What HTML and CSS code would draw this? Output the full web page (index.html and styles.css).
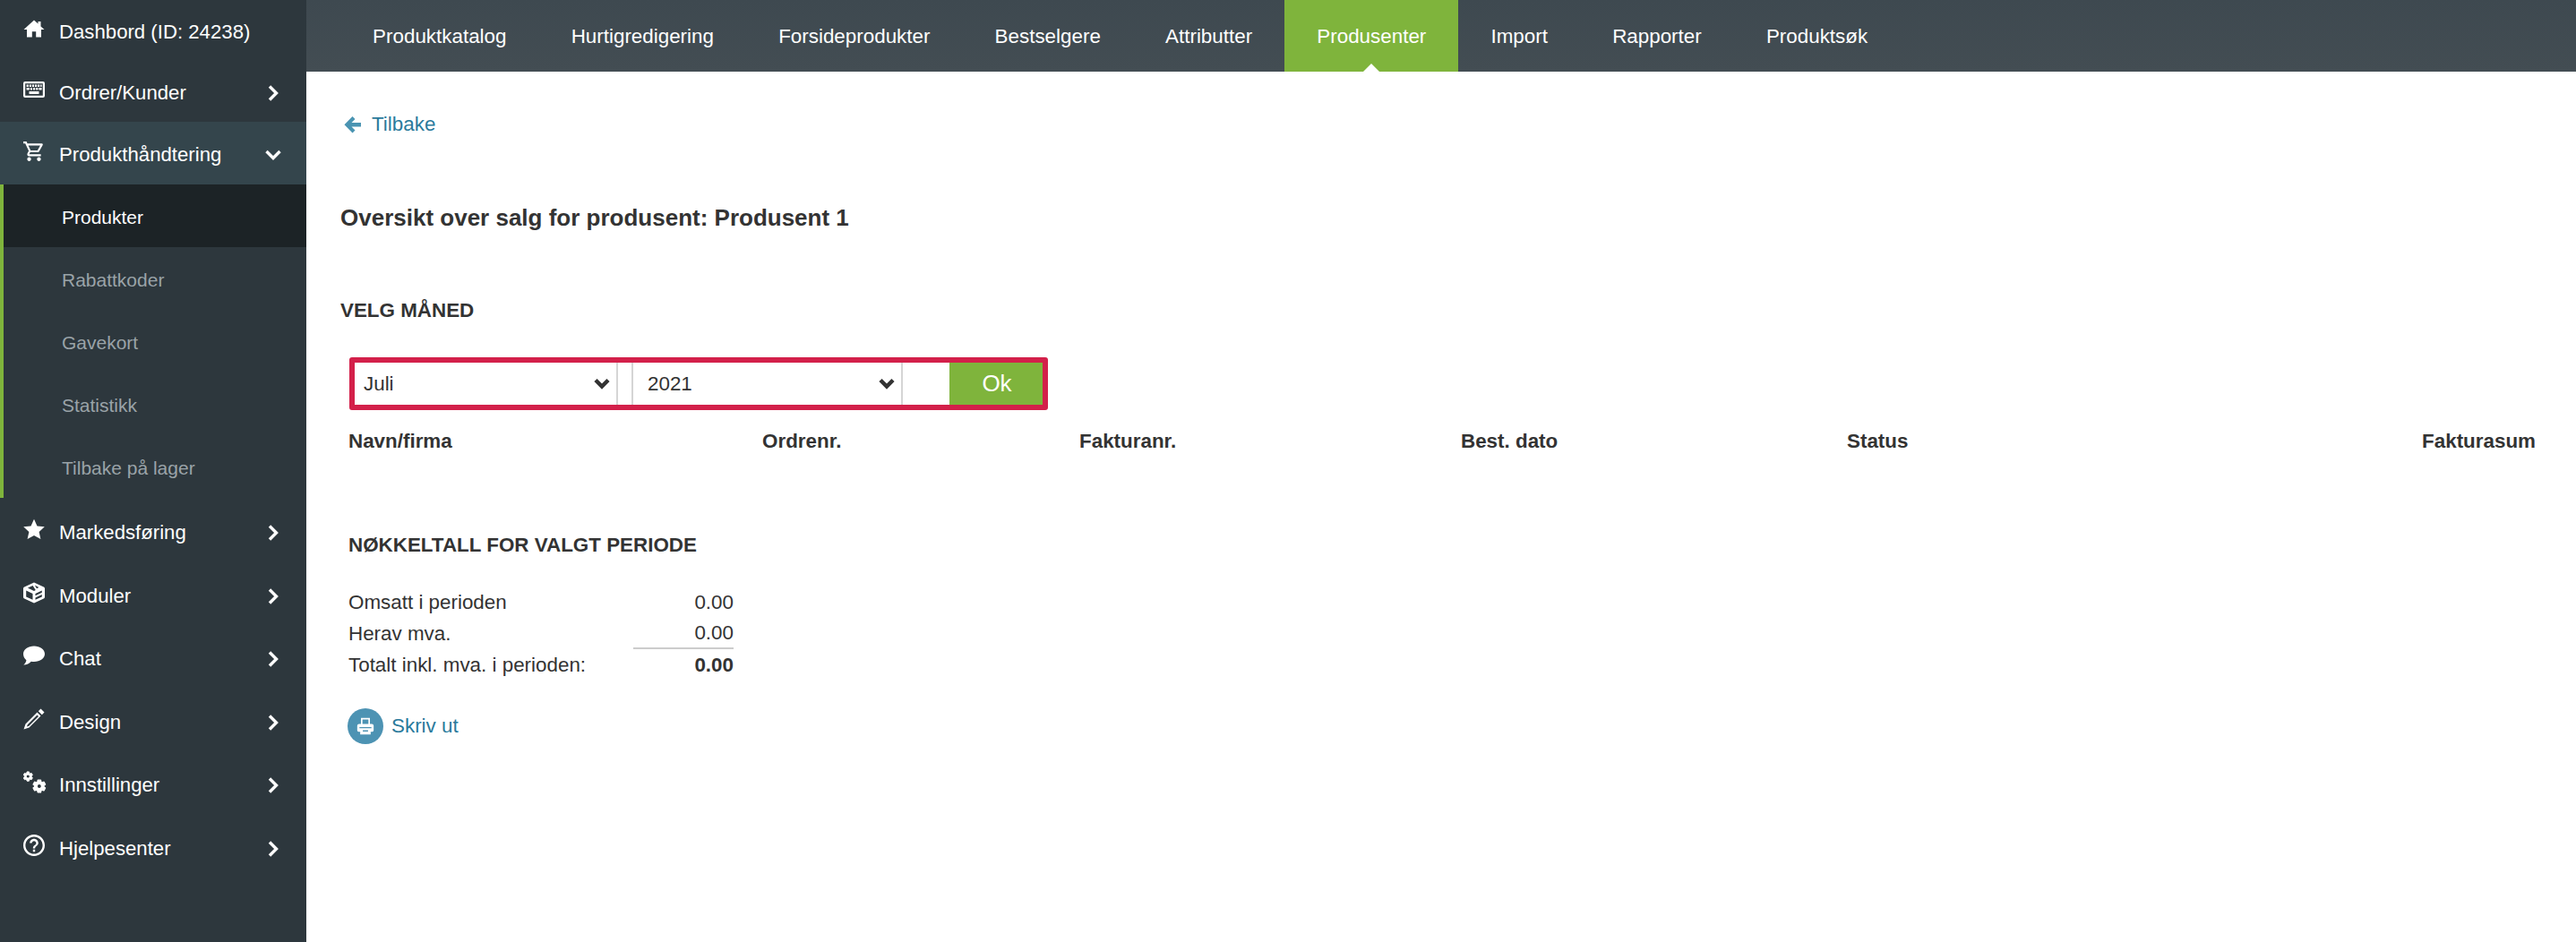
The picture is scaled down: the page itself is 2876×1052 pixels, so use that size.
FILE: index.html
```html
<!DOCTYPE html>
<html lang="no">
<head>
<meta charset="utf-8">
<title>Oversikt over salg</title>
<link rel="stylesheet" href="styles.css">
</head>
<body>
<div class="app">
  <aside class="sidebar">
    <a class="nav-item nav-short"><svg class="nav-icon" viewBox="0 0 24 24"><path d="M12 2.500 0.500 13H4v8.500h5.800v-6.300h4.400v6.300H20V13h3.500L19.500 9.400V4h-3v2.600z"/></svg><span class="nav-label">Dashbord (ID: 24238)</span></a>
    <a class="nav-item nav-short"><svg class="nav-icon" viewBox="0 0 24 24"><path fill-rule="evenodd" d="M2 3h20a2 2 0 0 1 2 2v14a2 2 0 0 1-2 2H2a2 2 0 0 1-2-2V5a2 2 0 0 1 2-2zM2.200 5.200v13.600h19.600V5.200zM3.600 6.500h2.200v2.400H3.600zM6.800 6.500H9v2.400H6.800zM9.900 6.500h2.200v2.400H9.900zM13 6.500h2.200v2.400H13zM16.100 6.500h2.200v2.400h-2.200zM19.200 6.500h1.400v2.400h-1.400zM3.600 10h3.200v2.400H3.600zM7.800 10H10v2.400H7.800zM11 10h2.200v2.400H11zM14.200 10h2.200v2.400h-2.200zM17.400 10h3.200v2.400h-3.200zM6.500 14h11v3h-11z"/></svg><span class="nav-label">Ordrer/Kunder</span><svg class="nav-chev" viewBox="0 0 14 20"><path d="M3 2.500 10.500 10 3 17.500"/></svg></a>
    <a class="nav-item nav-open"><svg class="nav-icon" viewBox="1 1 22 22"><path d="M15.550 13c.75 0 1.410-.41 1.750-1.030l3.580-6.490A.996.996 0 0 0 20.010 4H5.210l-.94-2H1v2h2l3.600 7.590-1.350 2.440C4.520 15.370 5.480 17 7 17h12v-2H7l1.100-2h7.450zM6.160 6h12.150l-2.760 5H8.530L6.160 6zM7 18c-1.100 0-1.990.9-1.990 2S5.900 22 7 22s2-.9 2-2-.9-2-2-2zm10 0c-1.100 0-1.990.9-1.990 2s.89 2 1.990 2 2-.9 2-2-.9-2-2-2z"/></svg><span class="nav-label">Produkthåndtering</span><svg class="nav-chev nav-chev-down" viewBox="0 0 20 14"><path d="M2.500 3 10 10.500 17.500 3"/></svg></a>
    <div class="subnav">
      <a class="sub-item sub-active">Produkter</a>
      <a class="sub-item">Rabattkoder</a>
      <a class="sub-item">Gavekort</a>
      <a class="sub-item">Statistikk</a>
      <a class="sub-item">Tilbake på lager</a>
    </div>
    <a class="nav-item"><svg class="nav-icon" viewBox="0 0 24 24"><path d="M12 .8l3.500 7.600 8.300.9-6.200 5.600 1.800 8.200L12 18.900l-7.400 4.200 1.800-8.200L.2 9.300l8.300-.9z"/></svg><span class="nav-label">Markedsføring</span><svg class="nav-chev" viewBox="0 0 14 20"><path d="M3 2.500 10.500 10 3 17.500"/></svg></a>
    <a class="nav-item"><svg class="nav-icon" viewBox="0 0 24 24"><path fill-rule="evenodd" d="M12 .5 22.800 5.500c.7.300 1.200 1 1.200 1.800v9.400c0 .8-.5 1.500-1.200 1.800L12 23.500 1.200 18.500C.5 18.200 0 17.500 0 16.700V7.300C0 6.500.5 5.800 1.200 5.500zM3.200 9.500v6.900l7.300 3.400v-6.900zM13.500 12.900v2.300l7.300-3.400V9.500zM13.500 17.400v2.400l7.300-3.400V14zM10.600 4 5 6.600l7 3.300 1.800-.9zM12.800 3.600 15 7.200l2.400-1.100z"/></svg><span class="nav-label">Moduler</span><svg class="nav-chev" viewBox="0 0 14 20"><path d="M3 2.500 10.500 10 3 17.500"/></svg></a>
    <a class="nav-item"><svg class="nav-icon" viewBox="0 0 24 24"><path d="M12 1.500c6.600 0 12 3.900 12 8.800s-5.400 8.800-12 8.800c-1.100 0-2.200-.1-3.200-.3C6.800 21 3.500 22.600.3 22.500c1.500-1.300 2.900-3.200 3.100-5.300C1.300 15.600 0 13.100 0 10.300 0 5.400 5.400 1.500 12 1.500z"/></svg><span class="nav-label">Chat</span><svg class="nav-chev" viewBox="0 0 14 20"><path d="M3 2.500 10.500 10 3 17.500"/></svg></a>
    <a class="nav-item"><svg class="nav-icon" viewBox="0 0 24 24"><path fill-rule="evenodd" d="M19.500 .5 23.500 4.500 20.800 7.200 16.800 3.200zM15.500 4.500 19.500 8.500 6.500 21.500 .5 23.500l2-6zM15.500 7.500 4.800 18.200l-.9 2.400 2.400-.9L17 9z"/></svg><span class="nav-label">Design</span><svg class="nav-chev" viewBox="0 0 14 20"><path d="M3 2.500 10.500 10 3 17.500"/></svg></a>
    <a class="nav-item"><svg class="nav-icon nav-icon-gears" viewBox="0 0 26 26"><use href="#gear" transform="translate(-1.200 .6) scale(.54)"/><use href="#gear" transform="translate(9.200 9.400) scale(.72)"/></svg><span class="nav-label">Innstillinger</span><svg class="nav-chev" viewBox="0 0 14 20"><path d="M3 2.500 10.500 10 3 17.500"/></svg></a>
    <a class="nav-item"><svg class="nav-icon" viewBox="2 2 20 20"><path d="M11 18h2v-2h-2v2zm1-16C6.480 2 2 6.480 2 12s4.480 10 10 10 10-4.480 10-10S17.520 2 12 2zm0 18c-4.410 0-8-3.590-8-8s3.590-8 8-8 8 3.590 8 8-3.590 8-8 8zm0-14c-2.210 0-4 1.790-4 4h2c0-1.100.9-2 2-2s2 .9 2 2c0 2-3 1.750-3 5h2c0-2.250 3-2.500 3-5 0-2.210-1.790-4-4-4z"/></svg><span class="nav-label">Hjelpesenter</span><svg class="nav-chev" viewBox="0 0 14 20"><path d="M3 2.500 10.500 10 3 17.500"/></svg></a>
  </aside>
  <div class="main">
    <nav class="topbar">
      <a class="tab">Produktkatalog</a>
      <a class="tab">Hurtigredigering</a>
      <a class="tab">Forsideprodukter</a>
      <a class="tab">Bestselgere</a>
      <a class="tab">Attributter</a>
      <a class="tab tab-active">Produsenter</a>
      <a class="tab">Import</a>
      <a class="tab">Rapporter</a>
      <a class="tab">Produktsøk</a>
    </nav>
    <main class="content">
      <a class="back"><svg class="back-icon" viewBox="0 0 20 20"><path d="M9.500 1 12.500 4 8.500 8H19v4.500H8.500l4 4-3 3L0.500 10.200z"/></svg>Tilbake</a>
      <h1 class="title">Oversikt over salg for produsent: Produsent 1</h1>
      <h2 class="section-title">VELG MÅNED</h2>
      <form class="filter">
        <span class="select-wrap select-wrap-month"><select class="select"><option>Juli</option></select><svg class="select-chev" viewBox="0 0 20 14"><path d="M3 2.500 10 9.500 17 2.500"/></svg></span>
        <span class="filter-gap"></span>
        <span class="select-wrap select-wrap-year"><select class="select"><option>2021</option></select><svg class="select-chev" viewBox="0 0 20 14"><path d="M3 2.500 10 9.500 17 2.500"/></svg></span>
        <button class="ok" type="button">Ok</button>
      </form>
      <div class="inner">
        <div class="table-head">
          <span>Navn/firma</span>
          <span>Ordrenr.</span>
          <span>Fakturanr.</span>
          <span>Best. dato</span>
          <span>Status</span>
          <span class="col-right">Fakturasum</span>
        </div>
        <h2 class="section-title stats-title">NØKKELTALL FOR VALGT PERIODE</h2>
        <div class="stats">
          <div class="stat-row"><span>Omsatt i perioden</span><span class="stat-val">0.00</span></div>
          <div class="stat-row"><span>Herav mva.</span><span class="stat-val stat-line">0.00</span></div>
          <div class="stat-row"><span>Totalt inkl. mva. i perioden:</span><b class="stat-val">0.00</b></div>
        </div>
        <a class="print"><span class="print-badge"><svg class="print-icon" viewBox="0 0 24 24"><path fill-rule="evenodd" d="M6 1h12v8h2.500A2.500 2.500 0 0 1 23 11.500v6a2 2 0 0 1-2 2h-2V23H5v-3.500H3a2 2 0 0 1-2-2v-6A2.500 2.500 0 0 1 3.500 9H6zM8 3v6h8V3zM4 13.200h16v1.600H4zM8.500 17.500v1.700h7v-1.700z"/></svg></span>Skriv ut</a>
      </div>
    </main>
  </div>
</div>
<svg class="defs" width="0" height="0"><defs><symbol id="gear" viewBox="0 0 24 24" width="24" height="24" overflow="visible"><path d="M19.140 12.940c.04-.3.06-.61.06-.94 0-.32-.02-.64-.07-.94l2.030-1.580a.49.49 0 0 0 .12-.61l-1.920-3.320a.488.488 0 0 0-.59-.22l-2.390.96c-.5-.38-1.030-.7-1.620-.94l-.36-2.540a.484.484 0 0 0-.48-.41h-3.840c-.24 0-.43.17-.47.41l-.36 2.540c-.59.24-1.130.57-1.620.94l-2.390-.96c-.22-.08-.47 0-.59.22L2.740 8.870c-.12.21-.08.47.12.61l2.030 1.580c-.05.3-.09.63-.09.94s.02.64.07.94l-2.030 1.580a.49.49 0 0 0-.12.61l1.920 3.320c.12.22.37.29.59.22l2.390-.96c.5.38 1.030.7 1.620.94l.36 2.540c.05.24.24.41.48.41h3.840c.24 0 .44-.17.47-.41l.36-2.540c.59-.24 1.130-.56 1.620-.94l2.390.96c.22.08.47 0 .59-.22l1.920-3.320c.12-.22.07-.47-.12-.61l-2.010-1.580zM12 15.600c-1.980 0-3.600-1.620-3.600-3.600s1.620-3.600 3.600-3.600 3.600 1.620 3.600 3.600-1.620 3.600-3.600 3.600z"/></symbol></defs></svg>
</body>
</html>
```
FILE: styles.css
```css
* { box-sizing: border-box; }
html, body { margin: 0; height: 100%; }
body {
  font-family: "Liberation Sans", Arial, sans-serif;
  color: #333;
  background: #fff;
  overflow: hidden;
}
a { text-decoration: none; }
.defs { display: block; }
.app { display: flex; height: 1052px; }

.sidebar {
  width: 342px;
  flex: none;
  background: #2d373d;
  color: #fff;
  font-size: 22.200px;
}
.nav-item {
  display: flex;
  align-items: center;
  height: 70.500px;
  padding: 4px 30px 0 26px;
  color: #fff;
}
.nav-short { height: 68px; }
.nav-open { height: 70px; background: #34454c; }
.nav-icon {
  width: 24px;
  height: 24px;
  flex: none;
  margin-right: 16px;
  margin-top: -8px;
  fill: #fff;
}
.nav-icon-gears { width: 26px; height: 26px; margin-right: 14px; }
.nav-icon-gears use { stroke: #fff; stroke-width: 1.800; }
.nav-label { flex: 1; }
.nav-chev {
  width: 14px;
  height: 20px;
  flex: none;
  fill: none;
  stroke: #fff;
  stroke-width: 3.400;
}
.nav-chev-down { width: 20px; height: 14px; margin-left: -3px; margin-right: -3px; }
.subnav {
  border-left: 4px solid #7fb43c;
  margin-bottom: 2px;
}
.sub-item {
  display: flex;
  align-items: center;
  height: 70px;
  padding: 3px 0 0 65px;
  font-size: 21px;
  color: #9aa3a8;
}
.sub-active { background: #1c2326; color: #fff; }

.main { flex: 1; min-width: 0; }
.topbar {
  display: flex;
  height: 80px;
  padding-left: 38px;
  background: linear-gradient(#3e4950, #434d53);
}
.tab {
  position: relative;
  display: flex;
  align-items: center;
  padding: 1px 36.100px 0;
  font-size: 22.400px;
  color: #fff;
}
.tab-active { background: #7fb43c; }
.tab-active::after {
  content: "";
  position: absolute;
  left: 50%;
  bottom: 0;
  margin-left: -9px;
  border: 9px solid transparent;
  border-top: 0;
  border-bottom: 9px solid #fff;
}

.content { padding: 46px 45px 0 38px; }
.back {
  display: flex;
  align-items: center;
  height: 26px;
  font-size: 22.400px;
  color: #2a7a9c;
}
.back-icon { width: 20px; height: 20px; margin: 0 11px 0 4px; fill: #4a94b2; }
.title {
  margin: 76px 0 0;
  font-size: 26px;
  line-height: 30px;
  font-weight: 700;
}
.section-title {
  margin: 0;
  font-size: 22.400px;
  line-height: 26px;
  font-weight: 700;
}
.title + .section-title { margin-top: 76px; }
.filter {
  display: flex;
  width: 780px;
  height: 59px;
  margin: 39px 0 0 10px;
  border: 6px solid #d3204a;
  border-radius: 3px;
}
.select-wrap {
  position: relative;
  flex: none;
  border-right: 2px solid #d5d5d5;
}
.select-wrap-month { width: 294px; }
.select-wrap-year { width: 301px; }
.select {
  appearance: none;
  width: 100%;
  height: 100%;
  padding: 0 0 0 10px;
  border: 0;
  background: #fff;
  font: 22.400px "Liberation Sans", Arial, sans-serif;
  color: #333;
}
.select-wrap-year .select { padding-left: 16px; }
.select-chev {
  position: absolute;
  right: 6px;
  top: 17px;
  width: 20px;
  height: 14px;
  fill: none;
  stroke: #333;
  stroke-width: 4.500;
}
.filter-gap {
  width: 17px;
  flex: none;
  border-right: 2px solid #d5d5d5;
}
.ok {
  width: 104px;
  flex: none;
  margin-left: 52px;
  padding-left: 8px;
  border: 0;
  background: #7fb43c;
  color: #fff;
  font: 26px "Liberation Sans", Arial, sans-serif;
}
.inner { padding-left: 9px; }
.table-head {
  display: grid;
  grid-template-columns: 462px 354px 426px 431px 1fr auto;
  margin-top: 22px;
  font-size: 22.400px;
  line-height: 26px;
  font-weight: 700;
}
.col-right { text-align: right; }
.stats-title { margin-top: 90px; }
.stats { width: 430px; margin-top: 33px; font-size: 22.400px; }
.stat-row {
  display: flex;
  justify-content: space-between;
  height: 35px;
  align-items: center;
}
.stat-val { width: 112px; text-align: right; }
.stat-line { align-self: stretch; line-height: 34px; border-bottom: 2px solid #ccc; }
.print {
  display: flex;
  align-items: center;
  margin-top: 31px;
  margin-left: -1px;
  font-size: 22.400px;
  color: #2a7a9c;
}
.print-badge {
  display: flex;
  align-items: center;
  justify-content: center;
  width: 40px;
  height: 40px;
  margin-right: 9px;
  border-radius: 50%;
  background: #4d93b3;
}
.print-icon { width: 20px; height: 20px; fill: #fff; }
```
